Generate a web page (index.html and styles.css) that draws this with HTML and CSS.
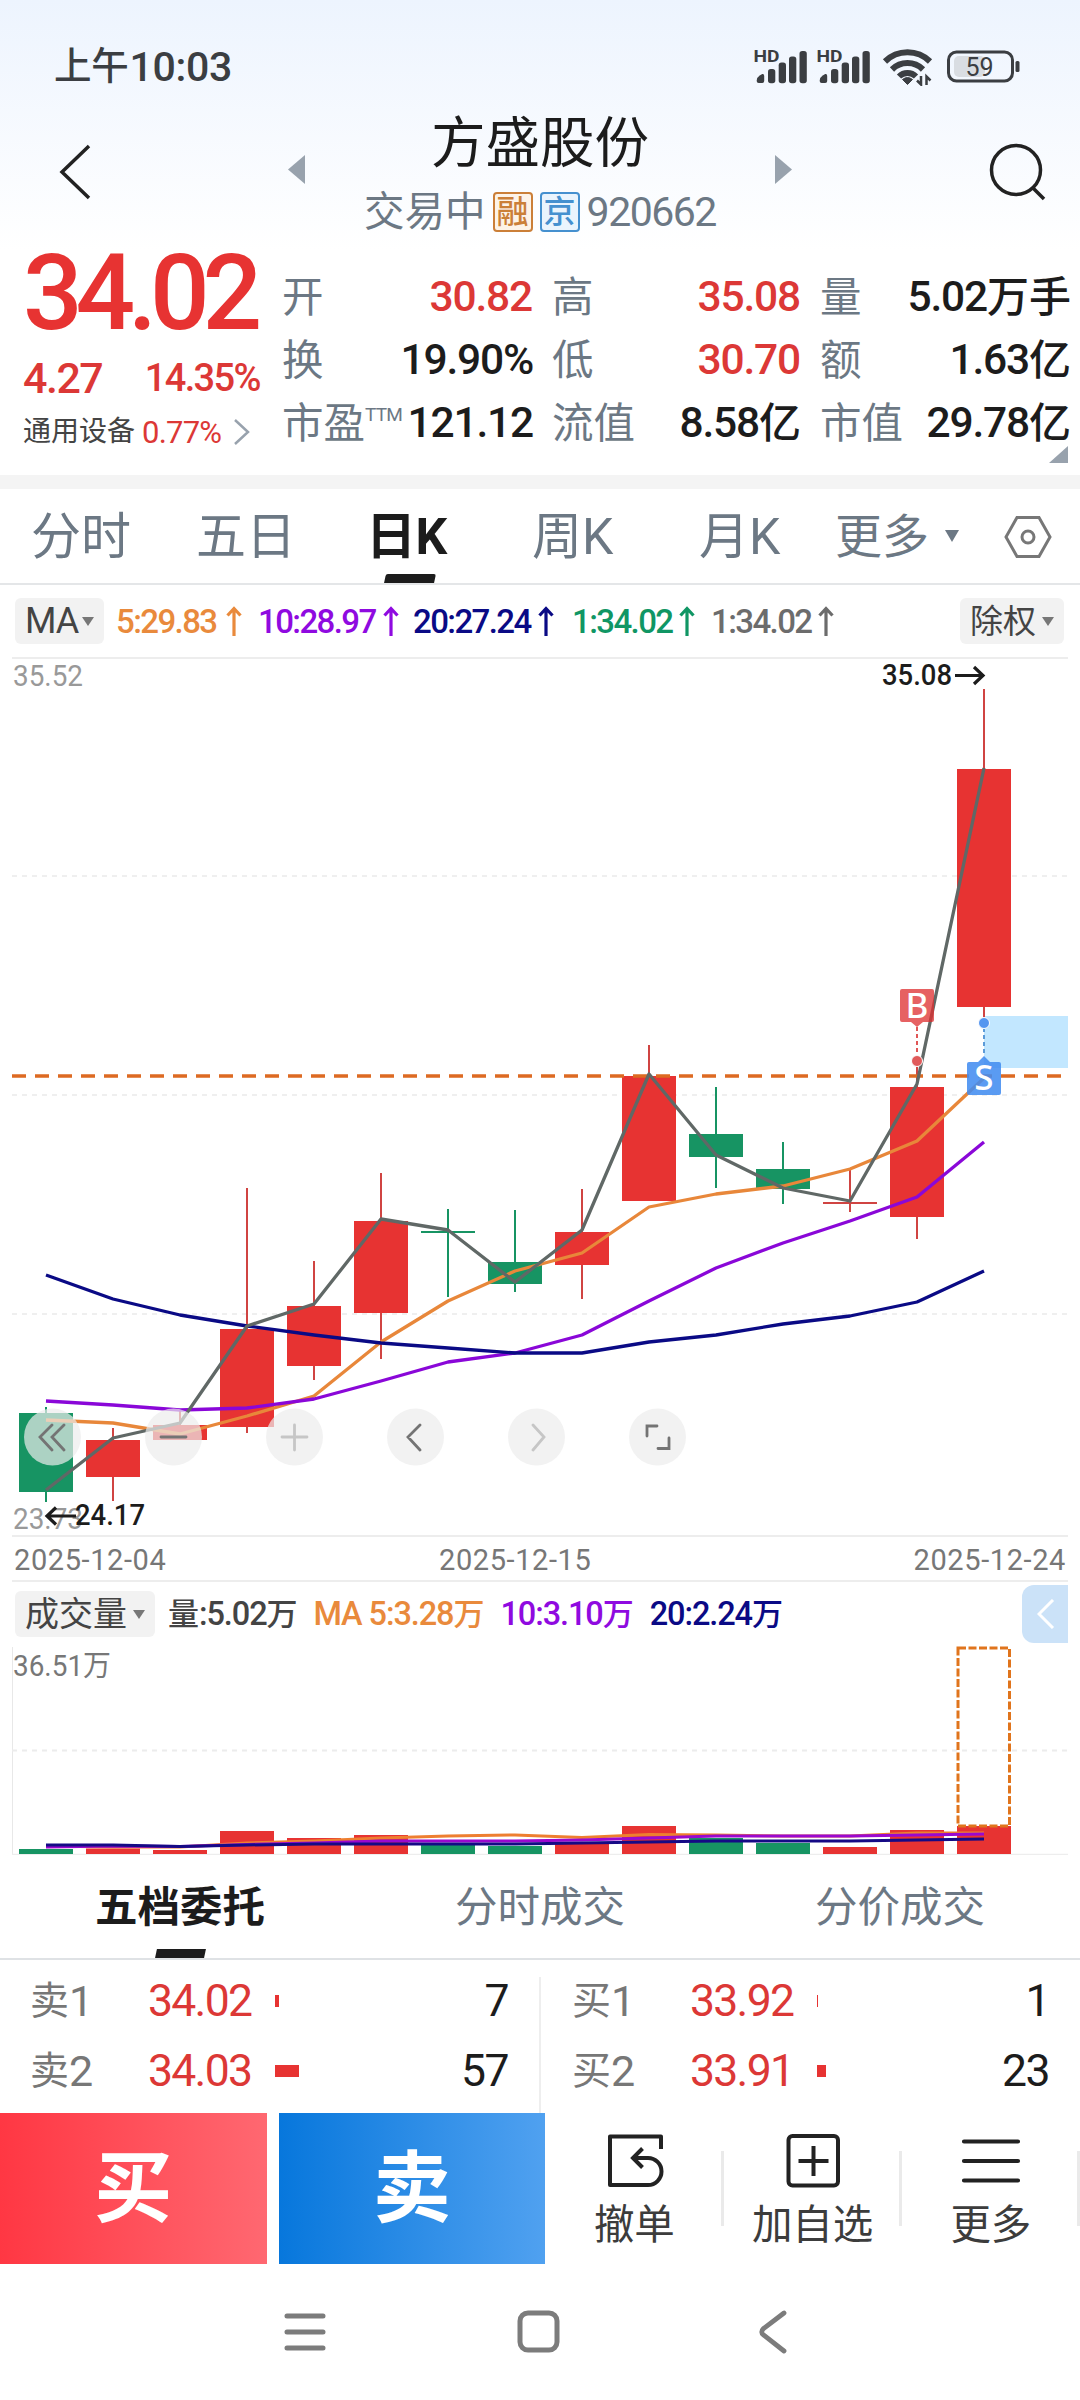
FILE: index.html
```html
<!DOCTYPE html>
<html lang="zh-CN">
<head>
<meta charset="utf-8">
<title>方盛股份 920662</title>
<link rel="stylesheet" href="styles.css">
</head>
<body>
<div class="top">
  <div class="status">
    <div class="clock"><span class="clock-cn">上午</span>10:03</div>
    <svg class="status-icons" width="270" height="40" viewBox="752 46 270 40">
      <g id="sig" fill="#3b3e42">
        <text x="753.500" y="62" class="hd" textLength="26" lengthAdjust="spacingAndGlyphs">HD</text>
        <path d="M756.700 80.500q0-3 3-5l2.500-1.500q2-.5 2 2v5q0 2-2 2h-3.500q-2 0-2-2z"/><rect x="768" y="69" width="7.300" height="14.300" rx="2.800"/><rect x="778.700" y="62.500" width="7.300" height="20.800" rx="2.800"/><rect x="789" y="56.500" width="7.300" height="26.800" rx="2.800"/><rect x="799.500" y="51" width="7.300" height="32.300" rx="2.800"/>
      </g>
      <use href="#sig" x="63"/>
      <g fill="none" stroke="#3b3e42" stroke-width="6">
        <path d="M885 61.500a32 32 0 0 1 45 0"/><path d="M892 69.500a22 22 0 0 1 31 0"/><path d="M899 76.500a12 12 0 0 1 17 0"/>
      </g>
      <path d="M902.500 79.500q5-4 10 0L907.500 84.500z" fill="#3b3e42" stroke="#3b3e42" stroke-width="1"/>
      <path d="M921 76v8.500l-4-4M926.500 85v-8.500l4 4" fill="none" stroke="#3b3e42" stroke-width="2.500"/>
      <rect x="954" y="56" width="31" height="21" rx="5" fill="#d9dde2"/>
      <rect x="948.500" y="52" width="64" height="29" rx="8" fill="none" stroke="#3b3e42" stroke-width="3"/>
      <rect x="1015.500" y="61" width="4" height="11" rx="1.500" fill="#3b3e42"/>
      <text x="965.500" y="76" class="batt">59</text>
    </svg>
  </div>
  <div class="nav">
    <svg class="nav-back" width="34" height="60" viewBox="0 0 34 60"><path d="M31 4L4 30L31 56" fill="none" stroke="#222" stroke-width="3.500"/></svg>
    <svg class="tri" width="17" height="29" viewBox="0 0 17 29"><path d="M17 0v29L0 14.500z" fill="#98a2ad"/></svg>
    <div class="title">
      <div class="name">方盛股份</div>
      <div class="sub"><span>交易中</span><span class="tag tag-o">融</span><span class="tag tag-b">京</span><span class="code">920662</span></div>
    </div>
    <svg class="tri" width="17" height="29" viewBox="0 0 17 29"><path d="M0 0v29L17 14.500z" fill="#98a2ad"/></svg>
    <svg class="nav-search" width="60" height="60" viewBox="0 0 60 60"><g fill="none" stroke="#222" stroke-width="3.500"><circle cx="28" cy="28" r="24.500"/><path d="M45 46l11 11"/></g></svg>
  </div>
  <div class="quote">
    <div class="main">
      <div class="price">34.02</div>
      <div class="chg"><span class="diff">4.27</span><span class="pct">14.35%</span></div>
      <div class="sector"><span>通用设备</span><span class="spct">0.77%</span><svg width="18" height="26" viewBox="0 0 18 26"><path d="M2 1l13 12L2 25" fill="none" stroke="#98a2ad" stroke-width="2.500"/></svg></div>
    </div>
    <div class="stats">
      <div class="st"><i>开</i><b class="up">30.82</b></div><div class="st"><i>高</i><b class="up">35.08</b></div><div class="st"><i>量</i><b>5.02<em>万手</em></b></div>
      <div class="st"><i>换</i><b>19.90%</b></div><div class="st"><i>低</i><b class="up">30.70</b></div><div class="st"><i>额</i><b>1.63<em>亿</em></b></div>
      <div class="st"><i>市盈<sup>TTM</sup></i><b>121.12</b></div><div class="st"><i>流值</i><b>8.58<em>亿</em></b></div><div class="st"><i>市值</i><b>29.78<em>亿</em></b></div>
    </div>
    <svg class="corner" width="19" height="17" viewBox="0 0 19 17"><path d="M19 0v17H0z" fill="#98a2ad"/></svg>
  </div>
</div>
<div class="tabs">
  <span>分时</span><span>五日</span><span class="on">日K</span><span>周K</span><span>月K</span>
  <span class="more">更多<svg width="14" height="12" viewBox="0 0 14 12"><path d="M0 0h14L7 12z" fill="#6c7884"/></svg></span>
  <svg class="hex" width="48" height="44" viewBox="0 0 48 44"><g fill="none" stroke="#777" stroke-width="3"><path d="M13 2.500h22L46 22L35 41.500H13L2 22z"/><circle cx="24" cy="22" r="6"/></g></svg>
</div>
<div class="ind">
  <span class="pill p-ma">MA<svg width="12" height="9" viewBox="0 0 12 9"><path d="M0 0h12L6 9z" fill="#777"/></svg></span>
  <span class="ma c-o">5:29.83<svg width="16" height="30" viewBox="0 0 16 30"><path d="M8 30V2M1.500 9.500l6.500-7 6.500 7"/></svg></span>
  <span class="ma c-p">10:28.97<svg width="16" height="30" viewBox="0 0 16 30"><path d="M8 30V2M1.500 9.500l6.500-7 6.500 7"/></svg></span>
  <span class="ma c-n">20:27.24<svg width="16" height="30" viewBox="0 0 16 30"><path d="M8 30V2M1.500 9.500l6.500-7 6.500 7"/></svg></span>
  <span class="ma c-g">1:34.02<svg width="16" height="30" viewBox="0 0 16 30"><path d="M8 30V2M1.500 9.500l6.500-7 6.500 7"/></svg></span>
  <span class="ma c-y">1:34.02<svg width="16" height="30" viewBox="0 0 16 30"><path d="M8 30V2M1.500 9.500l6.500-7 6.500 7"/></svg></span>
  <span class="pill p-right">除权<svg width="12" height="9" viewBox="0 0 12 9"><path d="M0 0h12L6 9z" fill="#777"/></svg></span>
</div>
<svg class="chart" width="1080" height="880" viewBox="0 657 1080 880">
  <path d="M12 658H1068M12 1536H1068" stroke="#ededed" stroke-width="2"/>
  <path d="M12 876H1068M12 1095H1068M12 1314H1068" stroke="#efefef" stroke-width="2" stroke-dasharray="5 5"/>
  <text x="13" y="686" class="lab" textLength="70" lengthAdjust="spacingAndGlyphs">35.52</text>
  <text x="13" y="1529" class="lab" textLength="70" lengthAdjust="spacingAndGlyphs">23.73</text>
  <rect x="984" y="1016" width="84" height="52" fill="#c2e7ff"/>
  <g fill="#179463" stroke="#179463" stroke-width="2">
    <path d="M46 1407V1502M448 1209V1297M421 1232h54M515 1210V1292M716 1087V1188M783 1142V1204"/>
    <g stroke="none"><rect x="19" y="1413" width="54" height="79"/><rect x="488" y="1262" width="54" height="22"/><rect x="689" y="1134" width="54" height="23"/><rect x="756" y="1169" width="54" height="20"/></g>
  </g>
  <g fill="#e73332" stroke="#d04442" stroke-width="2">
    <path d="M113 1428V1501M180 1411V1440M247 1188V1433M314 1261V1380M381 1173V1359M582 1189V1299M649 1045V1201M850 1170V1212M823 1203h54M917 1061V1239M984 689V1018"/>
    <g stroke="none"><rect x="86" y="1440" width="54" height="37"/><rect x="153" y="1425" width="54" height="15"/><rect x="220" y="1329" width="54" height="98"/><rect x="287" y="1306" width="54" height="60"/><rect x="354" y="1221" width="54" height="92"/><rect x="555" y="1232" width="54" height="33"/><rect x="622" y="1076" width="54" height="125"/><rect x="890" y="1087" width="54" height="130"/><rect x="957" y="769" width="54" height="238"/></g>
  </g>
  <path d="M12 1076H1062" stroke="#dd6a22" stroke-width="3.500" stroke-dasharray="14 9"/>
  <g fill="none" stroke-width="3.300" stroke-linejoin="round">
    <path stroke="#e8873a" d="M46 1420L113 1423 180 1434 247 1416 314 1396 381 1342 448 1301 515 1271 582 1253 649 1207 716 1194 783 1186 850 1169 917 1141 984 1078"/>
    <path stroke="#8a07d8" d="M46 1401L113 1405 180 1410 247 1408 314 1399 381 1381 448 1362 515 1353 582 1335 649 1301 716 1268 783 1243 850 1221 917 1197 984 1142"/>
    <path stroke="#0a0a85" d="M46 1275L113 1299 180 1315 247 1326 314 1335 381 1343 448 1348 515 1353 582 1353 649 1342 716 1335 783 1324 850 1316 917 1302 984 1271"/>
    <path stroke="#606866" d="M46 1490L113 1438 180 1423 247 1326 314 1304 381 1219 448 1230 515 1282 582 1230 649 1074 716 1155 783 1188 850 1201 917 1084 984 768"/>
  </g>
  <path d="M917 1027V1056" stroke="#e05656" stroke-width="2" stroke-dasharray="4 3"/>
  <circle cx="917" cy="1061" r="5.500" fill="#e05a5a" stroke="#fff" stroke-width="1"/>
  <path d="M902 989h30q2 0 2 2v29q0 2-2 2h-9l-6 5-6-5h-9q-2 0-2-2v-29q0-2 2-2z" fill="#de2f30" fill-opacity=".76"/>
  <text x="917" y="1017.500" class="mark">B</text>
  <path d="M984 1028V1056" stroke="#5c9bd8" stroke-width="2" stroke-dasharray="4 3"/>
  <circle cx="984" cy="1023" r="5.500" fill="#5596f0" stroke="#fff" stroke-width="1"/>
  <path d="M969 1062h9l6-6 6 6h9q2 0 2 2v29q0 2-2 2h-30q-2 0-2-2v-29q0-2 2-2z" fill="#428cf0" fill-opacity=".87"/>
  <text x="984" y="1089.500" class="mark">S</text>
  <g stroke="#1c1c1c" stroke-width="3.200" fill="none"><path d="M955 675.500H982M974 667l9 8.500-9 8.500M76 1516H48M56 1507.500l-9 8.500 9 8.500"/></g>
  <text x="882" y="684.500" class="lab dark" textLength="70" lengthAdjust="spacingAndGlyphs">35.08</text>
  <text x="75" y="1525" class="lab dark" textLength="70" lengthAdjust="spacingAndGlyphs">24.17</text>
  <g fill="#ececec" fill-opacity=".7"><circle cx="52.500" cy="1437" r="28.500"/><circle cx="173.500" cy="1437" r="28.500"/><circle cx="294.500" cy="1437" r="28.500"/><circle cx="415.500" cy="1437" r="28.500"/><circle cx="536.500" cy="1437" r="28.500"/><circle cx="657.500" cy="1437" r="28.500"/></g>
  <g fill="none" stroke="#747474" stroke-width="2.800" stroke-linecap="round">
    <path d="M52 1425L40 1437 52 1450M64 1425L52 1437 64 1450M161 1437h25M420 1425L408 1437 420 1450M647 1436V1426H657M658 1448.500H669V1438"/>
    <path stroke="#c6c6c6" d="M282 1437h25M294.500 1425v25M533 1425L544 1437 533 1450"/>
  </g>
</svg>
<div class="dates"><span>2025-12-04</span><span>2025-12-15</span><span>2025-12-24</span></div>
<div class="ind vol">
  <span class="pill p-vol">成交量<svg width="12" height="9" viewBox="0 0 12 9"><path d="M0 0h12L6 9z" fill="#777"/></svg></span>
  <span class="v c-k"><em>量</em>:5.02<em>万</em></span>
  <span class="v c-o">MA 5:3.28<em>万</em></span>
  <span class="v c-p">10:3.10<em>万</em></span>
  <span class="v c-n">20:2.24<em>万</em></span>
  <span class="drawer"><svg width="18" height="30" viewBox="0 0 18 30"><path d="M16 1L2 15L16 29" fill="none" stroke="#fff" stroke-width="3"/></svg></span>
</div>
<svg class="volchart" width="1080" height="209" viewBox="0 1646 1080 209">
  <path d="M12.500 1647V1854" stroke="#e8e8e8"/>
  <path d="M12 1854.500H1068" stroke="#ededed" stroke-width="1.500"/>
  <path d="M12 1750.500H1068" stroke="#ececec" stroke-width="2" stroke-dasharray="5 5"/>
  <text x="13" y="1676" class="lab vl" textLength="98" lengthAdjust="spacingAndGlyphs">36.51万</text>
  <g fill="#179463"><rect x="19" y="1849" width="54" height="5"/><rect x="421" y="1843" width="54" height="11"/><rect x="488" y="1846" width="54" height="8"/><rect x="689" y="1838" width="54" height="16"/><rect x="756" y="1843" width="54" height="11"/></g>
  <g fill="#e73332"><rect x="86" y="1848.500" width="54" height="5.500"/><rect x="153" y="1850" width="54" height="4"/><rect x="220" y="1831" width="54" height="23"/><rect x="287" y="1838" width="54" height="16"/><rect x="354" y="1835" width="54" height="19"/><rect x="555" y="1843" width="54" height="11"/><rect x="622" y="1826" width="54" height="28"/><rect x="823" y="1847" width="54" height="7"/><rect x="890" y="1830" width="54" height="24"/><rect x="957" y="1826" width="54" height="28"/></g>
  <rect x="958" y="1648" width="51.500" height="178" fill="none" stroke="#e0741c" stroke-width="3" stroke-dasharray="8 2.500"/>
  <g fill="none" stroke-width="3">
    <path stroke="#ee7f30" d="M46 1846L113 1847 180 1847 247 1843 314 1841 381 1838 448 1836 515 1835 582 1837.500 649 1834.500 716 1835 783 1836 850 1836 917 1833 984 1833"/>
    <path stroke="#9a08cf" d="M46 1847L113 1846 180 1846.500 247 1844.500 314 1843 381 1841 448 1841 515 1841 582 1840 649 1838 716 1836 783 1836 850 1836 917 1835 984 1834"/>
    <path stroke="#150a85" d="M46 1845L113 1845 180 1846.500 247 1845 314 1844 381 1844 448 1844 515 1844 582 1843 649 1842 716 1841 783 1841 850 1841 917 1840 984 1839"/>
  </g>
</svg>
<div class="tabs2"><span class="on">五档委托</span><span>分时成交</span><span>分价成交</span></div>
<div class="book">
  <div class="side">
    <div class="row"><i>卖<u>1</u></i><b>34.02</b><s style="width:4px"></s><span>7</span></div>
    <div class="row"><i>卖<u>2</u></i><b>34.03</b><s style="width:24px"></s><span>57</span></div>
  </div>
  <div class="side">
    <div class="row"><i>买<u>1</u></i><b>33.92</b><s style="width:1px"></s><span>1</span></div>
    <div class="row"><i>买<u>2</u></i><b>33.91</b><s style="width:9px"></s><span>23</span></div>
  </div>
</div>
<div class="actions">
  <div class="btn buy">买</div><div class="btn sell">卖</div>
  <div class="act"><svg width="60" height="58" viewBox="0 0 60 58"><g fill="none" stroke="#222" stroke-width="4"><path stroke-linejoin="round" d="M57 17V4.500H6V53H44A13 13 0 0 0 44 26H30"/><path d="M38.500 16.500L29 26L38.500 35.500"/></g></svg>撤单</div>
  <div class="act"><svg width="60" height="58" viewBox="0 0 60 58"><g fill="none" stroke="#222" stroke-width="4"><rect x="5.500" y="4" width="49.500" height="49.500" rx="4"/><path d="M15.500 29h30M30.500 14v30"/></g></svg>加自选</div>
  <div class="act"><svg width="60" height="58" viewBox="0 0 60 58"><path d="M3 9.500h54M3 29h54M3 48.500h54" stroke="#222" stroke-width="4.200" stroke-linecap="round"/></svg>更多</div>
</div>
<div class="sysnav">
  <svg width="46" height="46" viewBox="0 0 46 46"><path d="M5 7h36M5 23h36M5 39h36" stroke="#7c7c7c" stroke-width="5" stroke-linecap="round"/></svg>
  <svg width="46" height="46" viewBox="0 0 46 46"><rect x="4" y="4" width="37" height="37" rx="8" fill="none" stroke="#7c7c7c" stroke-width="5"/></svg>
  <svg width="46" height="46" viewBox="0 0 46 46"><path d="M34 4L13.500 19.500Q10 23 13.500 26L34 42" fill="none" stroke="#7c7c7c" stroke-width="4.800" stroke-linecap="round"/></svg>
</div>
</body>
</html>
```
FILE: styles.css
```css
* { box-sizing: border-box; }
body { margin: 0; width: 1080px; height: 2400px; overflow: hidden; background: #fff; color: #1c1c1c; font-family: Roboto, "Noto Sans CJK SC", sans-serif; line-height: 1; }
svg { display: block; flex: none; }
i, em, b, u, s { font-style: normal; font-weight: inherit; text-decoration: none; }

.top { height: 489px; border-bottom: 14px solid #f4f4f4; background: linear-gradient(#edf4fe, #fff 250px); }
.status { height: 102px; padding: 46px 58px 0 54px; display: flex; justify-content: space-between; }
.clock { font-size: 41px; font-weight: 500; letter-spacing: -.3px; color: #3b3e42; display: flex; align-items: center; height: 42px; }
.clock-cn { font-size: 37.5px; margin-right: 1px; }
.hd { font: 700 17px Roboto, sans-serif; }
.batt { font: 400 25px Roboto, sans-serif; fill: #3b3e42; }
.nav { height: 138px; display: flex; align-items: flex-start; padding: 0 31px 0 58px; }
.nav-back { margin-top: 40px; }
.nav .tri { margin-top: 53px; }
.nav-back + .tri { margin-left: 196px; }
.title { width: 470px; }
.name { font-size: 54.500px; text-align: center; line-height: 82px; }
.sub { display: flex; justify-content: center; align-items: center; height: 60px; margin-top: -2px; font-size: 40.500px; color: #6c7884; }
.tag { width: 40px; height: 40px; border: 2px solid; border-radius: 4px; font-size: 32px; font-weight: 500; line-height: 36px; text-align: center; margin-left: 7px; }
.tag-o { color: #cb7f38; background: #fdf3e8; }
.tag-b { color: #4590cf; background: #eaf4fd; }
.code { font-size: 41px; letter-spacing: -1.5px; margin-left: 7px; }
.nav-search { margin-top: 40px; margin-left: 196px; }

.quote { position: relative; height: 235px; display: flex; padding: 0 10px 0 23px; }
.main { width: 259px; color: #dc3836; font-weight: 500; }
.price { font-size: 105px; letter-spacing: -7.200px; height: 108px; line-height: 108px; color: #e73332; }
.chg { display: flex; justify-content: space-between; align-items: center; height: 60px; width: 237px; }
.diff { font-size: 43px; letter-spacing: -1.5px; }
.pct { font-size: 38px; letter-spacing: -1.6px; }
.sector { display: flex; align-items: center; font-size: 28px; height: 48px; color: #444; font-weight: 400; }
.spct { font-size: 31px; letter-spacing: -.8px; color: #dc3836; margin: 0 12px 0 7px; }
.stats { flex: 1; display: grid; grid-template-columns: 250px 248px 250px; column-gap: 20px; grid-auto-rows: 63px; padding-top: 26px; }
.st { display: flex; justify-content: space-between; align-items: center; white-space: nowrap; }
.st i { font-size: 41.500px; color: #6c7884; display: flex; }
.st sup { font-size: 19px; letter-spacing: -.8px; margin-top: 2px; }
.st b { font-size: 42.500px; font-weight: 500; letter-spacing: -1.2px; display: flex; align-items: center; margin-right: -1px; }
.st em { font-size: 42px; letter-spacing: 0; }
.st .up { margin-right: 0; }
.up { color: #dc3836; }
.corner { position: absolute; right: 12px; top: 206px; }

.tabs { height: 96px; border-bottom: 2px solid #e4e6e8; display: flex; font-size: 50px; color: #6c7884; line-height: 97px; padding-left: 31px; }
.tabs span { width: 165px; height: 94px; }
.tabs .on { width: 166px; color: #1c1c1c; font-weight: 700; padding-left: 5px; position: relative; letter-spacing: -.5px; }
.tabs .on::after { content: ""; position: absolute; left: 24px; bottom: 0; width: 50px; height: 9px; background: #1c1c1c; transform: skewX(-12deg); border-radius: 2px 2px 0 0; }
.tabs span:nth-child(4) { padding-left: 5px; }
.tabs span:nth-child(5) { padding-left: 7px; width: 143px; }
.tabs .more { width: 168px; display: flex; align-items: center; font-size: 47px; }
.more svg { margin-left: 16px; }
.hex { margin-top: 26px; margin-left: 1px; }

.ind { height: 72px; display: flex; align-items: center; padding: 0 16px 0 15px; font-size: 33px; position: relative; }
.pill { height: 46px; border-radius: 6px; background: #f2f2f2; color: #444; display: flex; align-items: center; padding: 0 10px; font-size: 34px; justify-content: space-between; }
.p-ma { width: 89px; margin-right: 12px; font-size: 36px; letter-spacing: -1px; }
.p-right { width: 104px; margin-left: auto; font-size: 33px; }
.ma { display: flex; align-items: center; justify-content: space-between; font-weight: 500; letter-spacing: -1.600px; width: 126px; margin-right: 16px; }
.ma svg { fill: none; stroke: currentColor; stroke-width: 3.200; }
.c-p, .c-n { width: 141px; margin-right: 14px; }
.c-n { margin-right: 18px; }
.c-g { width: 123px; }
.c-y { width: 123px; }
.c-o { color: #e98a3c; } .c-p { color: #8f0ae0; } .c-n { color: #0a0a85; } .c-g { color: #109664; } .c-y { color: #6c6c6c; } .c-k { color: #444; }
.lab { font: 400 29px Roboto, "Noto Sans CJK SC", sans-serif; fill: #999; }
.dark { fill: #1c1c1c; font-weight: 500; }
.vl { fill: #777; }
.mark { font: 500 35px "Noto Sans", sans-serif; fill: #fff; text-anchor: middle; }

.dates { height: 45px; margin: 0 12px; border-bottom: 2px solid #ededed; padding: 4px 2px 0; display: grid; grid-template-columns: 425px 1fr auto; align-items: center; font-size: 29px; letter-spacing: .6px; color: #777; }
.vol { height: 64px; padding-right: 12px; font-size: 32.500px; }
.p-vol { width: 140px; margin-right: 13px; }
.vol .v { font-weight: 500; letter-spacing: -1.100px; width: auto; margin-right: 16px; white-space: nowrap; }
.v em { font-size: 31px; letter-spacing: 0; }
.drawer { margin-left: auto; width: 46px; height: 58px; background: #cbe2f8; border-radius: 12px 0 0 12px; display: flex; align-items: center; padding-left: 15px; }

.tabs2 { height: 105px; border-bottom: 2px solid #dfe2e5; display: flex; font-size: 42.500px; color: #6c7884; }
.tabs2 span { width: 360px; text-align: center; line-height: 105px; height: 103px; }
.tabs2 .on { color: #1c1c1c; font-weight: 700; position: relative; }
.tabs2 .on::after { content: ""; position: absolute; left: 156px; bottom: 0; width: 49px; height: 9px; background: #1c1c1c; transform: skewX(-12deg); }
.book { height: 153px; display: flex; }
.side { width: 542px; padding: 6px 34px 0 30px; }
.side:first-child { background: linear-gradient(#eee, #eee) 539px 17px / 2px 140px no-repeat; }
.side + .side { width: 538px; padding-right: 31px; }
.row { height: 70px; display: flex; align-items: center; font-size: 44.500px; }
.row i { width: 118px; font-size: 39px; color: #777; display: flex; align-items: center; }
.row u { font-size: 43px; margin-left: 0; }
.row b { width: 127px; color: #dc3836; letter-spacing: -1.700px; }
.row s { height: 12px; background: #e73332; margin-bottom: 1px; }
.row span { margin-left: auto; letter-spacing: -1.5px; }

.actions { height: 151px; display: flex; }
.btn { width: 267px; color: #fff; font-size: 78px; font-weight: 700; text-align: center; line-height: 153px; height: 151px; }
.buy { background: linear-gradient(90deg, #ff3743, #ff6871); margin-right: 12px; }
.sell { background: linear-gradient(90deg, #0777dc, #50a1f0); }
.act { width: 178.500px; display: flex; flex-direction: column; align-items: center; font-size: 40.500px; color: #3c3c3c; padding-top: 19px; background: linear-gradient(#eaeaea, #eaeaea) right 38px / 3px 75px no-repeat; }
.act svg { margin-bottom: 15px; }
.sysnav { height: 136px; padding: 45px 0 0 282px; display: flex; gap: 188px; }
```
